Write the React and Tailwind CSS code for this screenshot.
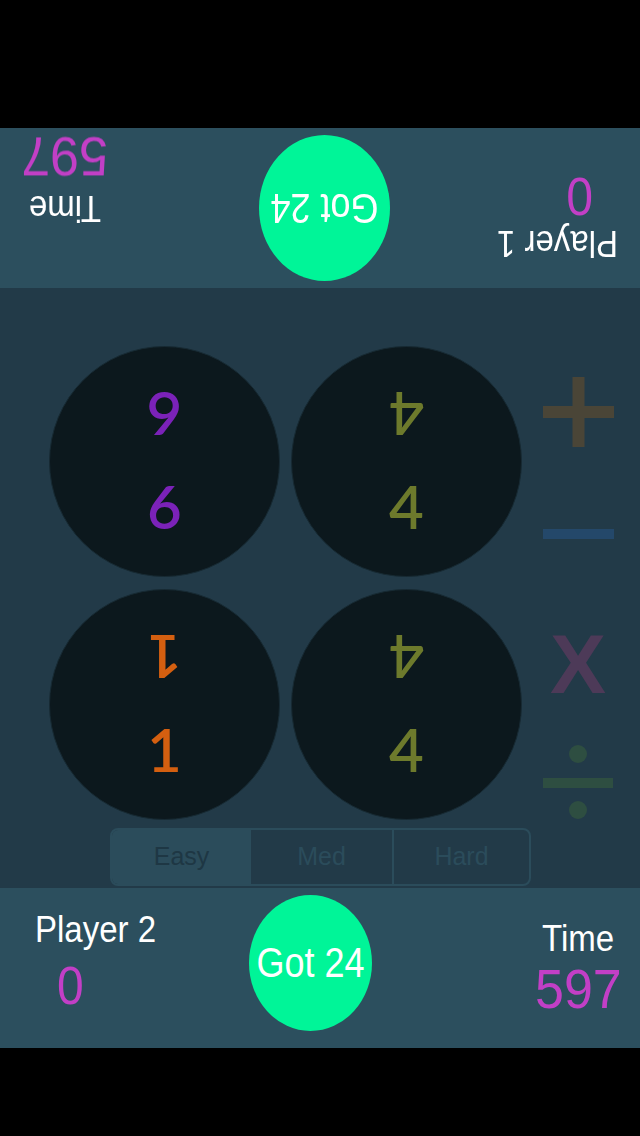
import React from "react";

const sans = "font-['Liberation_Sans',Arial,sans-serif]";

function GotButton({ w, h }) {
  return (
    <div
      className={`rounded-[50%] bg-[#00f598] flex items-center justify-center shrink-0 ${w} ${h}`}
    >
      <span className={`inline-block scale-y-[1.2] text-white text-[36px] leading-none ${sans}`}>
        Got 24
      </span>
    </div>
  );
}

function NumberCircle({ value, color }) {
  return (
    <div className="w-[231px] h-[231px] rounded-full bg-[#0c181d] border border-[#172a33] flex flex-col items-center pt-[37px] gap-[29px]">
      <div
        className={`h-[62px] flex items-center justify-center rotate-180 text-[60px] leading-none font-semibold font-['Lato',sans-serif] ${color}`}
      >
        {value}
      </div>
      <div
        className={`h-[62px] flex items-center justify-center text-[60px] leading-none font-semibold font-['Lato',sans-serif] ${color}`}
      >
        {value}
      </div>
    </div>
  );
}

export default function App() {
  return (
    <div className="w-[640px] h-[1136px] flex flex-col bg-black">
      <div className="h-[128px] bg-black" />

      {/* Player 1 bar, upside down */}
      <div className="h-[160px] bg-[#2c4f5e] rotate-180 flex">
        <div className="w-[250px] flex flex-col">
          <span className={`block ml-[22px] mt-[28px] scale-y-110 origin-center text-white text-[33px] leading-none ${sans}`}>
            Player 1
          </span>
          <span className={`block ml-[47px] mt-[7px] scale-y-110 text-[#c23fc6] text-[48px] leading-none ${sans}`}>
            0
          </span>
        </div>
        <div className="mt-[7px]">
          <GotButton w="w-[131px]" h="h-[146px]" />
        </div>
        <div className="flex-1 flex flex-col">
          <span className={`block ml-[158px] mt-[63px] scale-y-110 text-white text-[33px] leading-none ${sans}`}>
            Time
          </span>
          <span className={`block ml-[151px] mt-[10px] scale-y-105 text-[#c23fc6] text-[52px] leading-none ${sans}`}>
            597
          </span>
        </div>
      </div>

      {/* board */}
      <div className="h-[600px] bg-[#223a48] flex flex-col">
        <div className="flex">
          <div className="pl-[49px] pt-[58px] grid grid-cols-[231px_231px] gap-x-[11px] gap-y-[12px]">
            <NumberCircle value="6" color="text-[#7b22b8]" />
            <NumberCircle value="4" color="text-[#6d7a2c]" />
            <NumberCircle value="1" color="text-[#d45f10]" />
            <NumberCircle value="4" color="text-[#6d7a2c]" />
          </div>
          <div className="ml-[13px] w-[86px] flex flex-col items-center pt-[89px]">
            <svg width="71" height="70" viewBox="0 0 71 70">
              <rect x="29.5" y="0" width="12" height="70" fill="#4a4537" />
              <rect x="0" y="29" width="71" height="12" fill="#4a4537" />
            </svg>
            <svg className="mt-[82px]" width="71" height="10" viewBox="0 0 71 10">
              <rect x="0" y="0" width="71" height="10" fill="#24486a" />
            </svg>
            <div className={`mt-[83px] h-[84px] text-[84px] leading-none font-bold text-[#4d3a58] ${sans}`}>
              X
            </div>
            <svg className="mt-[39px]" width="70" height="75" viewBox="0 0 70 75">
              <circle cx="35" cy="9" r="9" fill="#2e4e41" />
              <rect x="0" y="33" width="70" height="10" fill="#2e4e41" />
              <circle cx="35" cy="65" r="9" fill="#2e4e41" />
            </svg>
          </div>
        </div>

        <div className="ml-[110px] mt-[8px] w-[421px] h-[58px] rounded-lg border-2 border-[#2b4c5b] overflow-hidden flex">
          <div className={`w-[139px] bg-[#2b4c5b] flex items-center justify-center text-[25px] text-[#1e3744] ${sans}`}>
            Easy
          </div>
          <div className={`w-[141px] flex items-center justify-center text-[25px] text-[#2b4c5b] ${sans}`}>
            Med
          </div>
          <div className={`flex-1 border-l-2 border-[#2b4c5b] flex items-center justify-center text-[25px] text-[#2b4c5b] ${sans}`}>
            Hard
          </div>
        </div>
      </div>

      {/* Player 2 bar */}
      <div className="h-[160px] bg-[#2c4f5e] flex">
        <div className="w-[249px] flex flex-col">
          <span className={`block ml-[35px] mt-[25px] scale-y-110 text-white text-[33px] leading-none ${sans}`}>
            Player 2
          </span>
          <span className={`block ml-[57px] mt-[16px] scale-y-110 text-[#c23fc6] text-[48px] leading-none ${sans}`}>
            0
          </span>
        </div>
        <div className="mt-[7px]">
          <GotButton w="w-[123px]" h="h-[136px]" />
        </div>
        <div className="flex-1 flex flex-col">
          <span className={`block ml-[170px] mt-[34px] scale-y-110 text-white text-[33px] leading-none ${sans}`}>
            Time
          </span>
          <span className={`block ml-[163px] mt-[8px] scale-y-105 text-[#c23fc6] text-[52px] leading-none ${sans}`}>
            597
          </span>
        </div>
      </div>

      <div className="h-[88px] bg-black" />
    </div>
  );
}
